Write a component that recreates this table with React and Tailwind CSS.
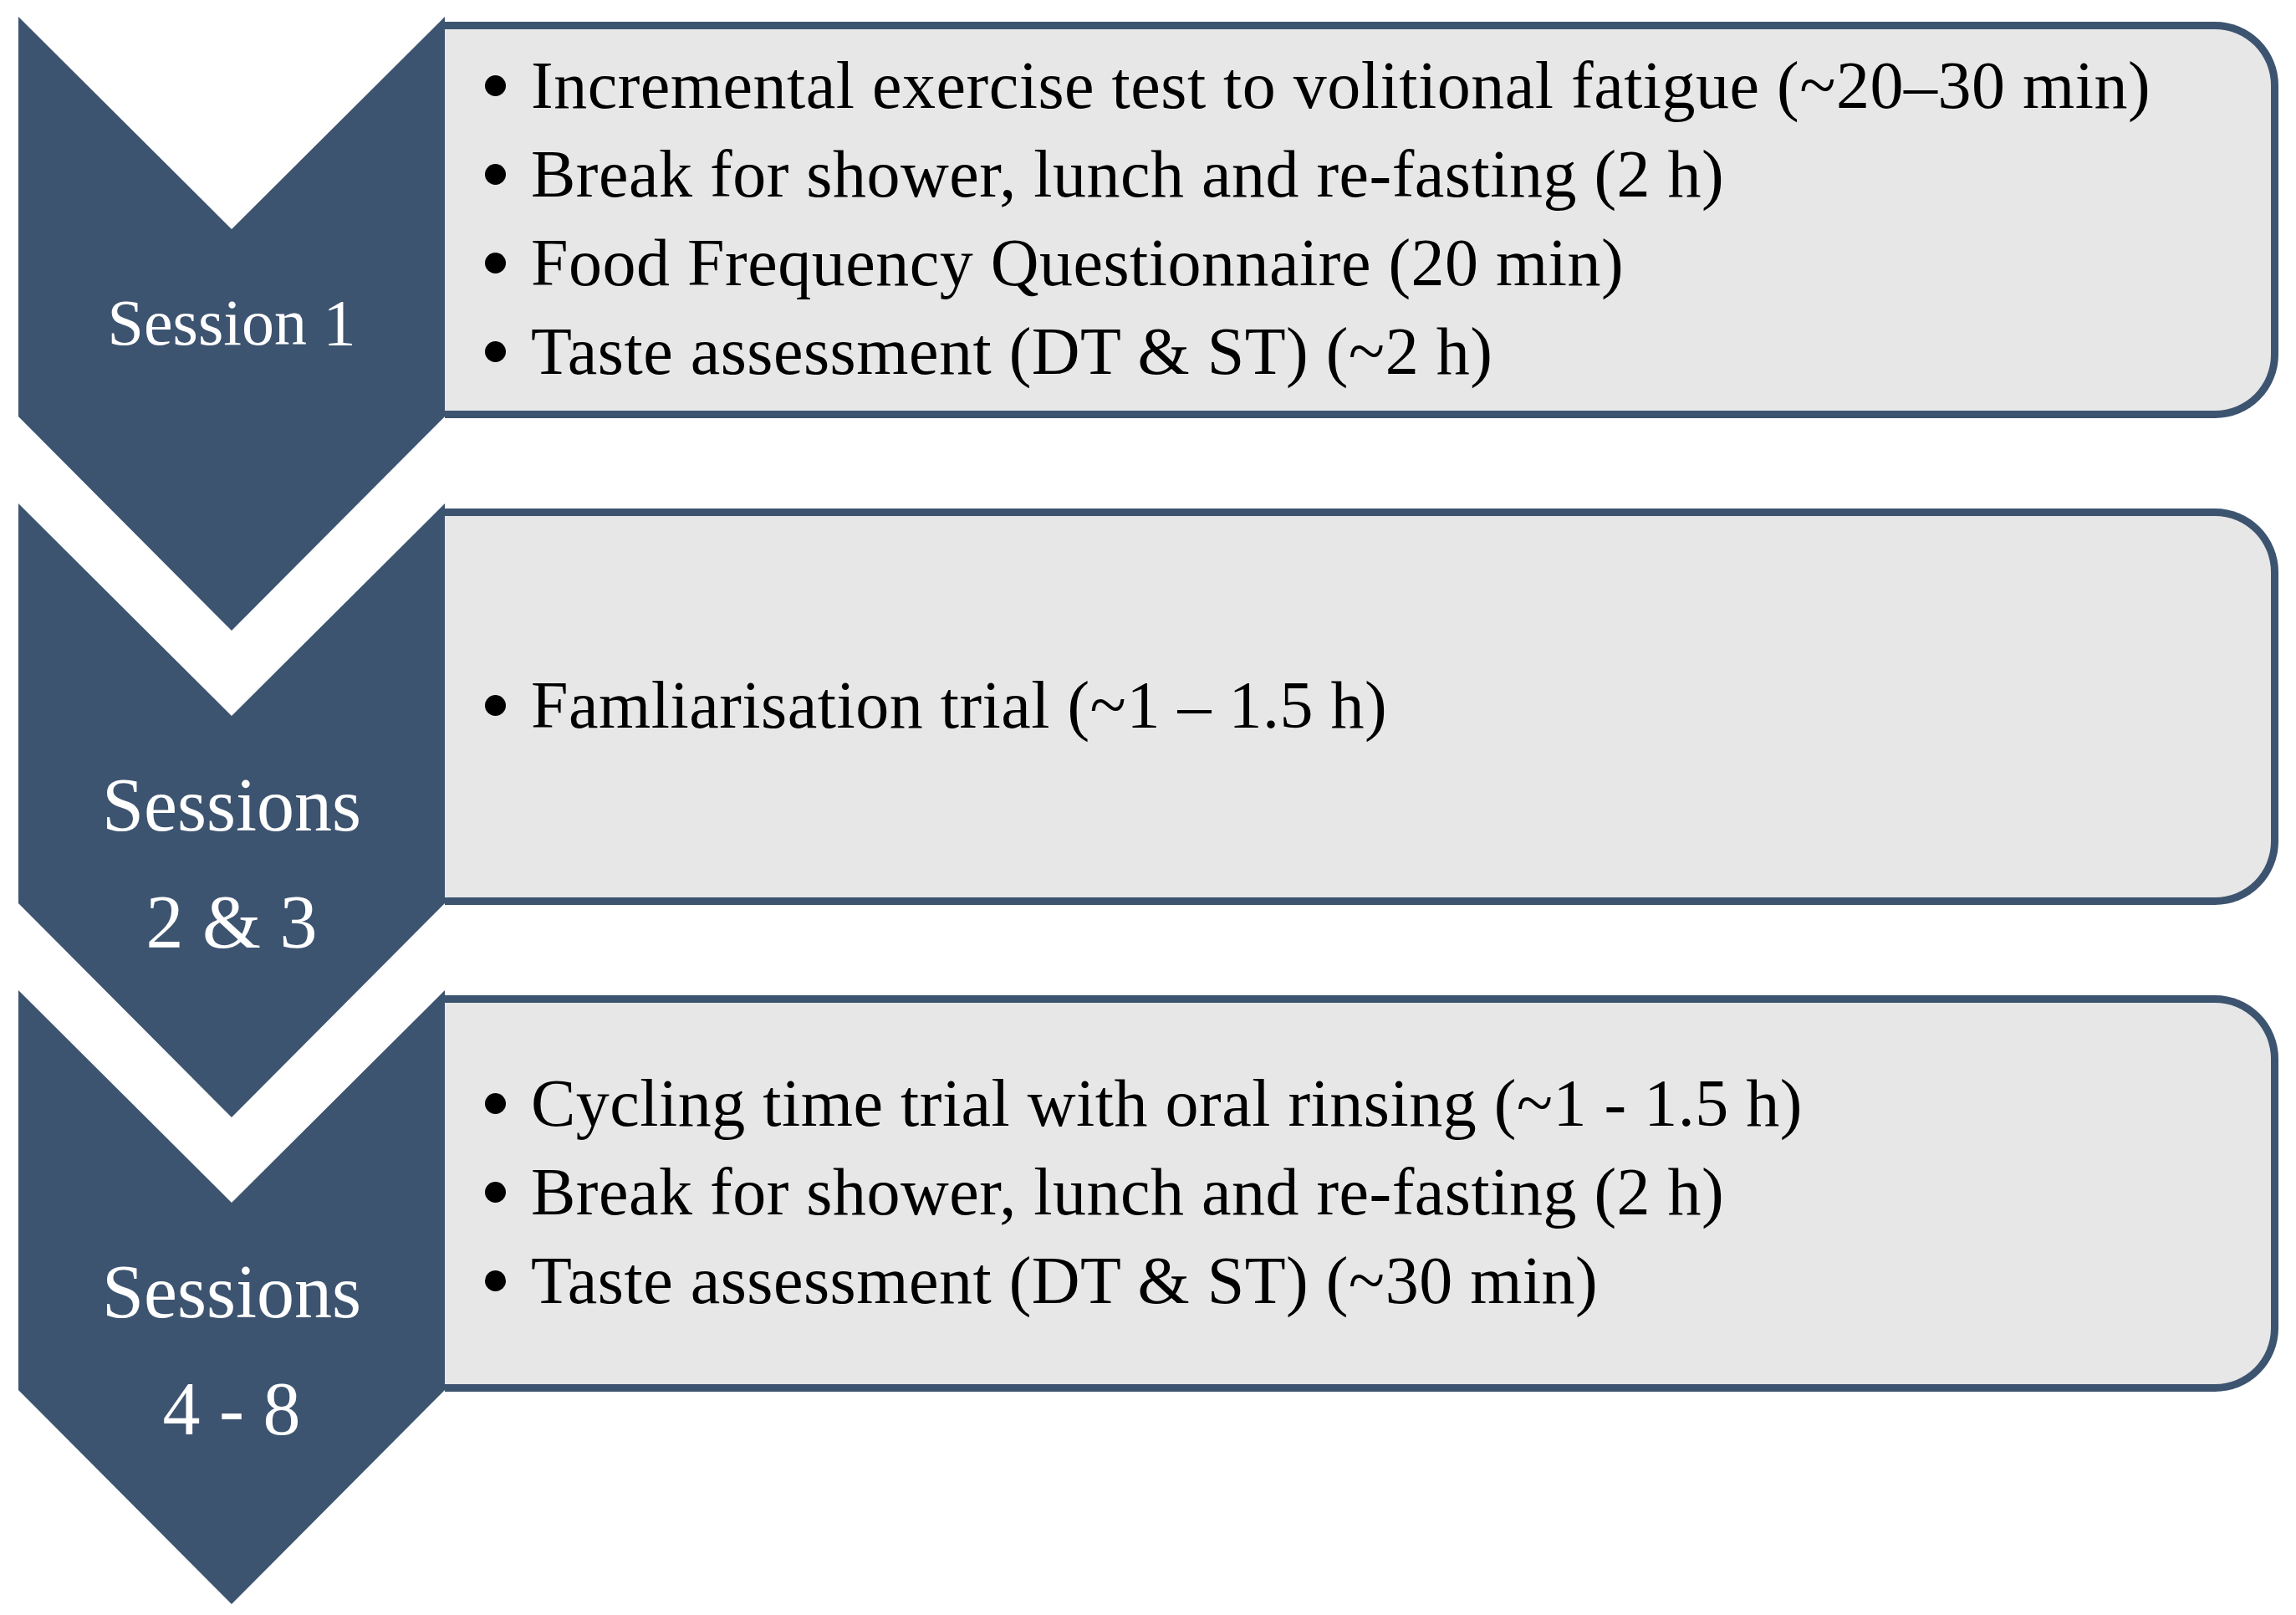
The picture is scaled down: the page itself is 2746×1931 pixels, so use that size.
import React from "react";

const rows = [
  {
    label: ["Session 1"],
    items: [
      "Incremental exercise test to volitional fatigue (~20–30 min)",
      "Break for shower, lunch and re-fasting (2 h)",
      "Food Frequency Questionnaire (20 min)",
      "Taste assessment (DT & ST) (~2 h)",
    ],
  },
  {
    label: ["Sessions", "2 & 3"],
    items: ["Famliarisation trial (~1 – 1.5 h)"],
  },
  {
    label: ["Sessions", "4 - 8"],
    items: [
      "Cycling time trial with oral rinsing (~1 - 1.5 h)",
      "Break for shower, lunch and re-fasting (2 h)",
      "Taste assessment (DT & ST) (~30 min)",
    ],
  },
];

function Chevron() {
  return (
    <svg
      className="absolute left-0 top-[-6px] w-[510px] h-[734px]"
      viewBox="0 0 510 734"
    >
      <polygon
        points="0,0 255,254 510,0 510,478 255,734 0,478"
        fill="#3d5470"
      />
    </svg>
  );
}

function Row({ label, items }) {
  const single = label.length === 1;
  return (
    <div className="flex h-[474px]">
      <div className="relative w-[510px] shrink-0">
        <Chevron />
        {single ? (
          <div className="absolute left-0 w-[510px] top-[321px] text-center text-white text-[78px] leading-[78px]">
            {label[0]}
          </div>
        ) : (
          <div className="absolute left-0 w-[510px] top-[285px] text-center text-white text-[90px] leading-[140px]">
            <div>{label[0]}</div>
            <div>{label[1]}</div>
          </div>
        )}
      </div>
      <div className="w-[2193px] shrink-0 border-[9px] border-l-0 border-[#3d5470] rounded-r-[76px] bg-[#e7e7e7] flex flex-col justify-center pl-[48px] pb-[4px]">
        {items.map((t, i) => (
          <div key={i} className="flex items-center h-[106px] text-[80px] leading-[106px] tracking-[0.5px] text-black whitespace-nowrap">
            <span className="w-[25px] h-[25px] rounded-full bg-black shrink-0 mr-[30px]" />
            <span>{t}</span>
          </div>
        ))}
      </div>
    </div>
  );
}

export default function App() {
  return (
    <div
      className="w-[2746px] h-[1931px] bg-white overflow-hidden"
      style={{ fontFamily: '"Liberation Serif", "Times New Roman", serif' }}
    >
      <div className="flex flex-col gap-[108px] pt-[26px] pl-[22px]">
        {rows.map((r, i) => (
          <Row key={i} {...r} />
        ))}
      </div>
    </div>
  );
}
